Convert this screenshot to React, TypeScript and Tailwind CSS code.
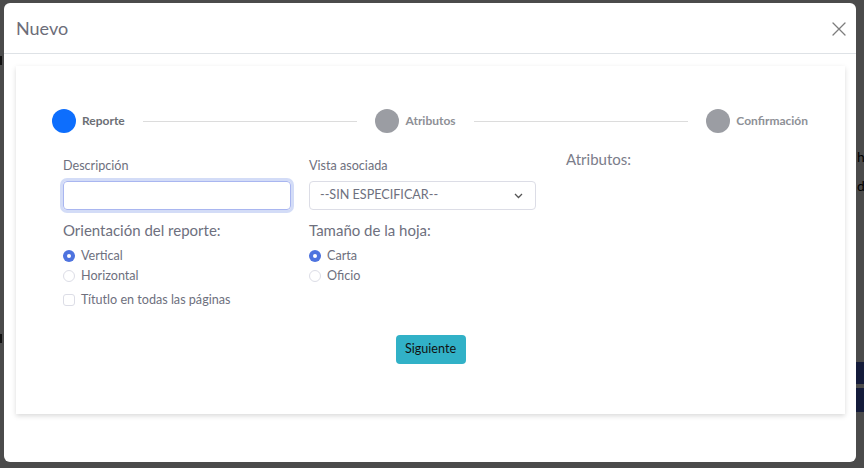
import React from 'react';

const Radio: React.FC<{ checked?: boolean; label: string }> = ({ checked, label }) => (
  <label className="flex items-center h-5 gap-[6px] text-[12.6px] text-[#6e707e]">
    {checked ? (
      <span className="w-[12px] h-[12px] rounded-full bg-[#4e73df] flex items-center justify-center">
        <span className="w-[4px] h-[4px] rounded-full bg-white" />
      </span>
    ) : (
      <span className="w-[12px] h-[12px] rounded-full border border-[#dcdde6] bg-white" />
    )}
    {label}
  </label>
);

const Step: React.FC<{ active?: boolean; label: string }> = ({ active, label }) => (
  <div className="flex items-center gap-[6px] shrink-0">
    <span className={active ? 'w-6 h-6 rounded-full bg-[#0d6efd]' : 'w-6 h-6 rounded-full bg-[#9b9da3]'} />
    <span className={active ? 'text-[12px] font-bold text-[#6c6f75]' : 'text-[12px] font-bold text-[#8e9096]'}>{label}</span>
  </div>
);

const App: React.FC = () => {
  return (
    <div className="relative w-[864px] h-[468px] bg-[#4b4b4b] overflow-hidden" style={{ fontFamily: 'Lato, "Noto Sans", sans-serif' }}>
      {/* bits of the page behind the overlay */}
      <div className="absolute left-0 top-[56px] w-[2px] h-[9px] bg-[#111]" />
      <div className="absolute left-0 top-[334px] w-[2px] h-[9px] bg-[#111]" />
      <span className="absolute left-[857px] top-[146px] text-[14px] text-black">h</span>
      <span className="absolute left-[857px] top-[175px] text-[14px] text-black">d</span>
      <div className="absolute left-[856px] top-[362px] w-[8px] h-[22px] bg-[#141b3a]" />
      <div className="absolute left-[856px] top-[388px] w-[8px] h-[24px] bg-[#141b3a]" />

      <div className="absolute left-[4px] top-[3px] w-[852px] h-[459px] bg-white rounded-[6px] flex flex-col">
        <div className="h-[51px] shrink-0 flex items-center justify-between pl-3 pr-[10px] border-b border-[#dee2e6]">
          <h5 className="text-[18px] text-[#6c6d79]">Nuevo</h5>
          <svg width="14" height="14" viewBox="0 0 14 14" className="mt-[2px]">
            <path d="M1 1L13 13M13 1L1 13" stroke="#7d7d7d" strokeWidth="1.3" strokeLinecap="round" />
          </svg>
        </div>

        <div className="pt-3 pl-3 pr-[11px]">
          <div className="bg-white shadow-[0_2px_5px_rgba(0,0,0,0.15)] pt-[43px] pb-[50px]">
            <div className="flex items-center pl-[36px] pr-[37px]">
              <Step active label="Reporte" />
              <div className="flex-1 h-px bg-[#dcdcdc] mx-[18px]" />
              <Step label="Atributos" />
              <div className="flex-1 h-px bg-[#dcdcdc] mx-[18px]" />
              <Step label="Confirmación" />
            </div>

            <div className="flex mt-[16px] pl-[47px]">
              <div className="w-[228px] pt-[9px]">
                <div className="text-[12.6px] leading-4 text-[#6e707e]">Descripción</div>
                <input className="mt-[7px] w-full h-[29px] rounded-[4px] border border-[#a9b6f0] outline-none shadow-[0_0_0_3px_rgba(78,115,223,0.25)]" />
                <div className="mt-[10px] text-[15px] leading-5 text-[#6e707e]">Orientación del reporte:</div>
                <div className="mt-[6px]">
                  <Radio checked label="Vertical" />
                  <Radio label="Horizontal" />
                </div>
                <label className="mt-1 flex items-center h-5 gap-[6px] text-[12.6px] text-[#6e707e]">
                  <span className="w-[12px] h-[12px] rounded-[3px] border border-[#dcdde6] bg-white" />
                  Títutlo en todas las páginas
                </label>
              </div>

              <div className="w-[227px] ml-[18px] pt-[9px]">
                <div className="text-[12.6px] leading-4 text-[#6e707e]">Vista asociada</div>
                <div className="mt-[7px] w-full h-[29px] rounded-[4px] border border-[#dcdde6] flex items-center justify-between pl-[10px] pr-[12px]">
                  <span className="text-[12.6px] text-[#6e707e]">--SIN ESPECIFICAR--</span>
                  <svg width="9" height="6" viewBox="0 0 9 6">
                    <path d="M1 1L4.5 4.5L8 1" stroke="#555" strokeWidth="1.3" fill="none" />
                  </svg>
                </div>
                <div className="mt-[10px] text-[15px] leading-5 text-[#6e707e]">Tamaño de la hoja:</div>
                <div className="mt-[6px]">
                  <Radio checked label="Carta" />
                  <Radio label="Oficio" />
                </div>
              </div>

              <div className="ml-[30px]">
                <div className="text-[15px] leading-5 text-[#7b7d8a]">Atributos:</div>
              </div>
            </div>

            <div className="flex justify-center mt-[25px]">
              <button className="w-[70px] h-[29px] rounded-[4px] bg-[#31b1c7] text-[12.6px] text-[#111]">Siguiente</button>
            </div>
          </div>
        </div>
      </div>
    </div>
  );
};

export default App;
